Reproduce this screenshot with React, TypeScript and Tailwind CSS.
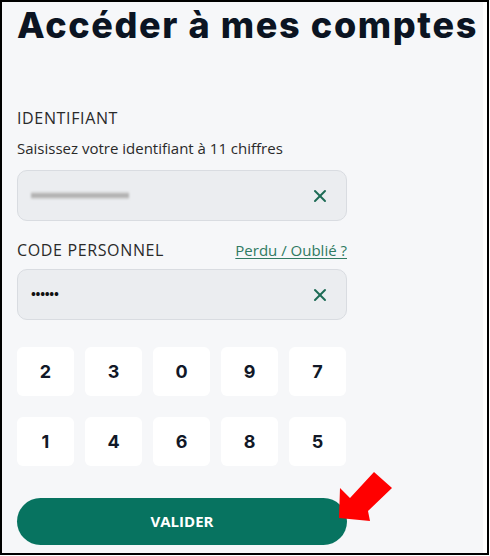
import { X } from 'lucide-react';

const row1 = ['2', '3', '0', '9', '7'];
const row2 = ['1', '4', '6', '8', '5'];

function KeyRow({ digits }: { digits: string[] }) {
    return (
        <div className="flex gap-[11px]">
            {digits.map((d) => (
                <button
                    key={d}
                    className="w-[57px] h-[49px] rounded-md bg-white text-[18px] font-bold text-[#111827] font-['Inter',sans-serif]"
                >
                    {d}
                </button>
            ))}
        </div>
    );
}

export default function App() {
    return (
        <div className="w-[490px] h-[556px] bg-white">
            <div className="relative w-[489px] h-[555px] border-2 border-black bg-white flex overflow-hidden">
                <div className="w-[481px] h-full bg-[#f6f7f9] pl-[15px] font-['Open_Sans',sans-serif] text-[#2a2a2a]">
                    <h1 className="mt-[1px] text-[36px] leading-[44px] font-extrabold tracking-[0.045em] text-[#0b1422] font-['Inter',sans-serif] whitespace-nowrap">
                        Accéder à mes comptes
                    </h1>

                    <div className="w-[330px] mt-[61px]">
                        <p className="text-[16px] leading-[20px] tracking-[0.04em]">IDENTIFIANT</p>
                        <p className="mt-[10px] text-[15px] leading-[20px]">
                            Saisissez votre identifiant à 11 chiffres
                        </p>
                        <div className="mt-[12px] h-[51px] rounded-[10px] border border-[#d9dce1] bg-[#ebedf0] flex items-center justify-between pl-[13px] pr-[16px]">
                            <div className="w-[98px] h-[7px] bg-gradient-to-b from-[#d8d8d8] via-[#a9a9a9] to-[#d8d8d8] blur-[0.8px]" />
                            <X size={20} strokeWidth={2.4} className="text-[#1d6b55]" />
                        </div>

                        <div className="mt-[19px] flex items-end justify-between">
                            <span className="text-[16px] leading-[20px] tracking-[0.04em]">CODE PERSONNEL</span>
                            <a className="text-[15px] leading-[20px] text-[#2f7a62] underline underline-offset-2">
                                Perdu / Oublié ?
                            </a>
                        </div>
                        <div className="mt-[9px] h-[51px] rounded-[10px] border border-[#d9dce1] bg-[#ebedf0] flex items-center justify-between pl-[13px] pr-[16px]">
                            <span className="text-[13px] font-bold tracking-[-0.3px] text-[#111]">••••••</span>
                            <X size={20} strokeWidth={2.4} className="text-[#1d6b55]" />
                        </div>

                        <div className="mt-[27px] flex flex-col gap-[21px]">
                            <KeyRow digits={row1} />
                            <KeyRow digits={row2} />
                        </div>

                        <button className="mt-[32px] w-[330px] h-[47px] rounded-full bg-[#077360] text-white text-[15px] font-bold">
                            VALIDER
                        </button>
                    </div>
                </div>

                <svg
                    className="absolute left-[334px] top-[464px]"
                    width="62"
                    height="60"
                    viewBox="0 0 62 60"
                >
                    <polygon
                        points="3,52 4,22 14,32 38,6 56,22 32,45 34,55"
                        fill="#ff0000"
                    />
                </svg>
            </div>
        </div>
    );
}
